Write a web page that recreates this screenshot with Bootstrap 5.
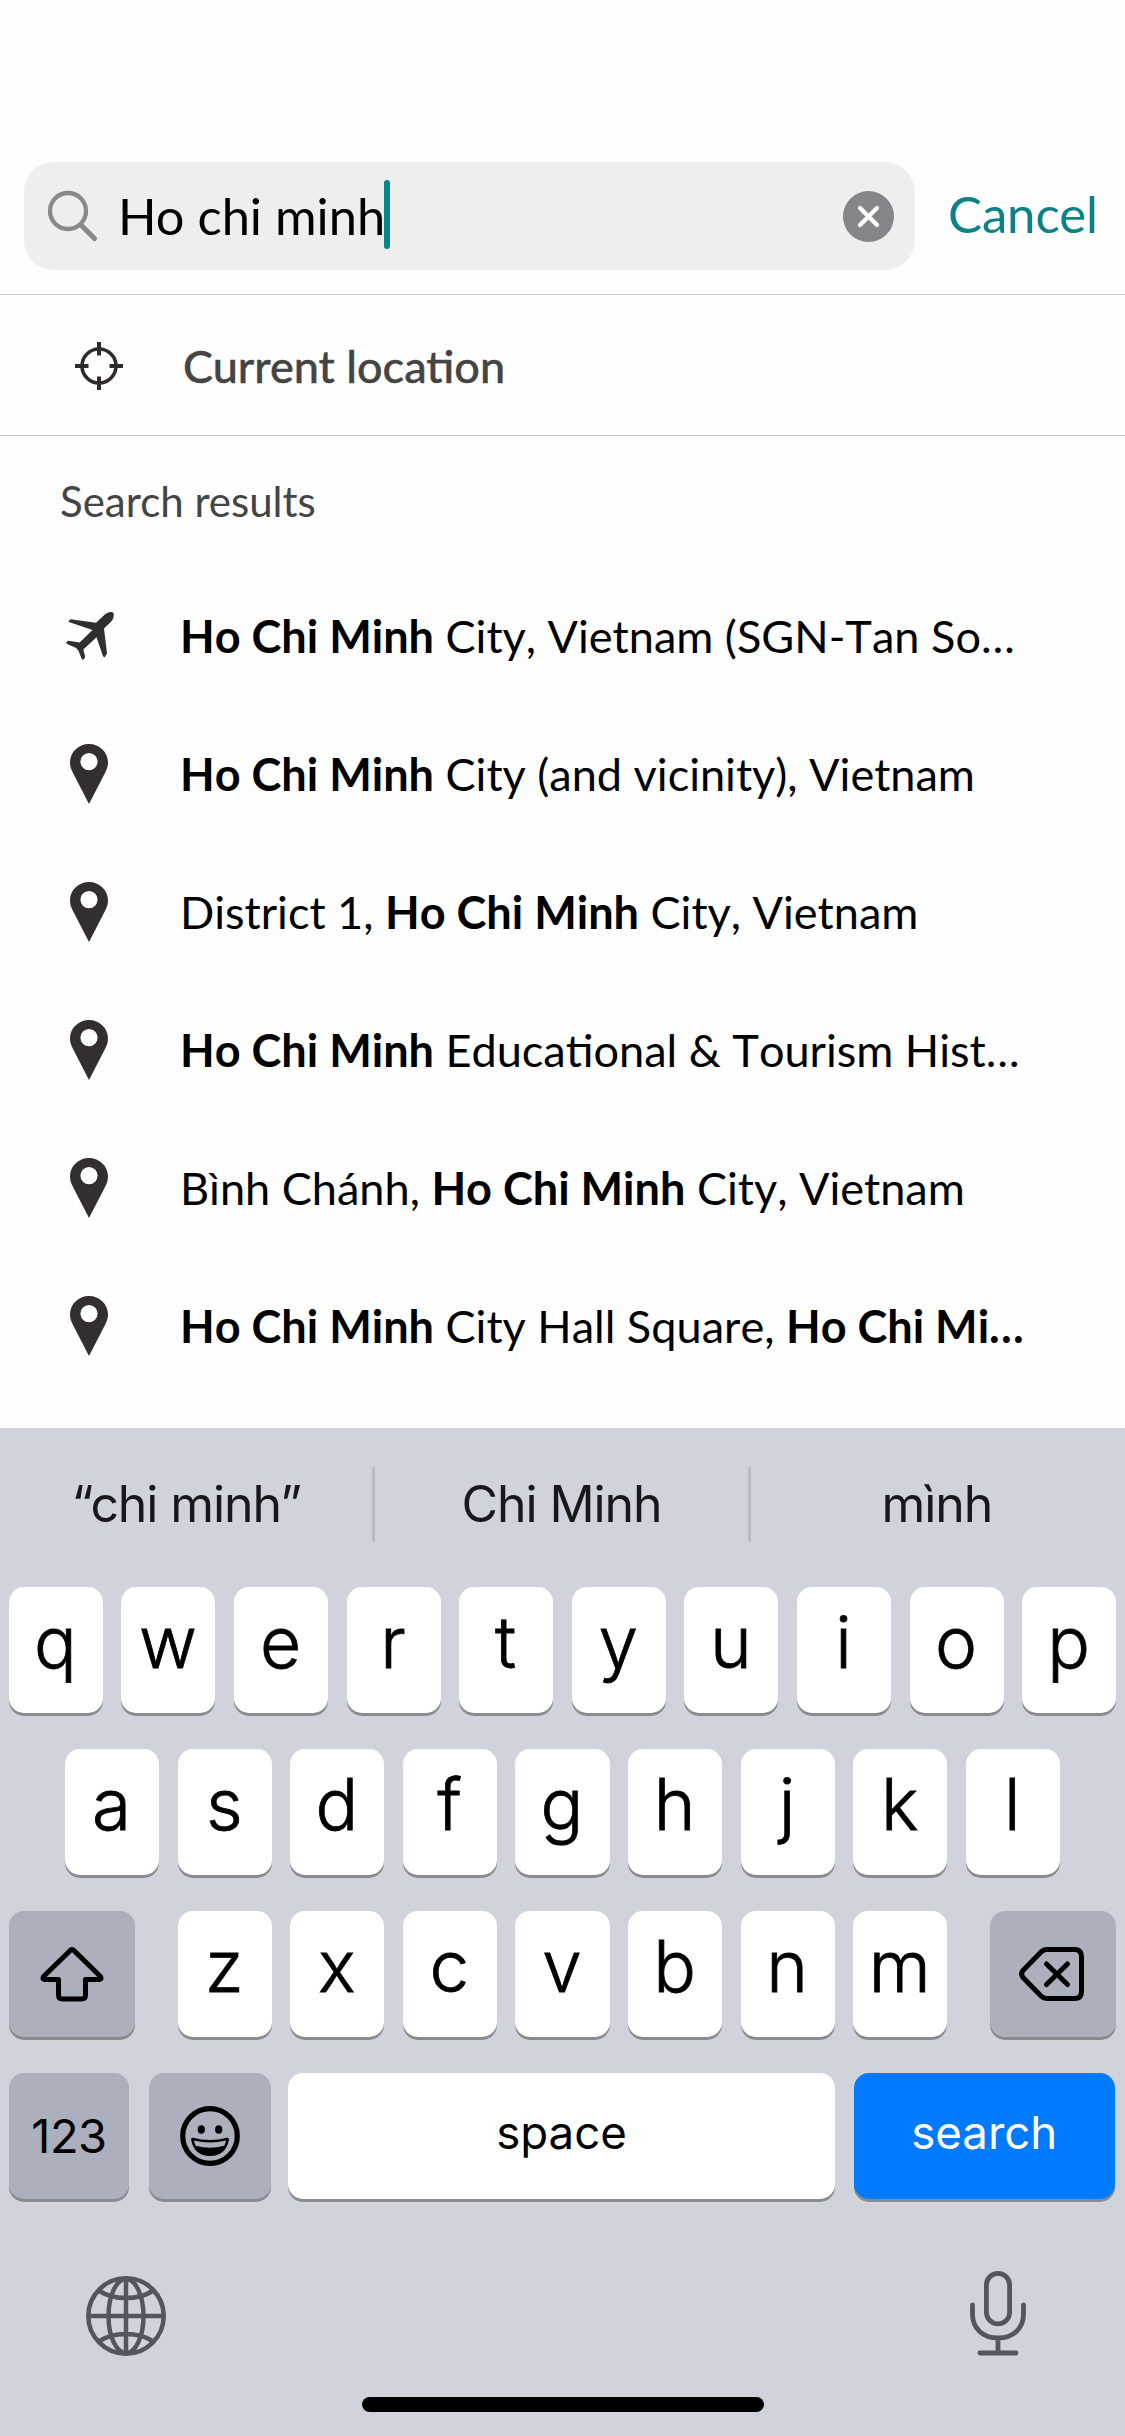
<!DOCTYPE html>
<html lang="en">
<head>
<meta charset="utf-8">
<meta name="viewport" content="width=device-width, initial-scale=1">
<title>Location search</title>
<link rel="stylesheet" href="https://cdn.jsdelivr.net/npm/bootstrap@5.3.0/dist/css/bootstrap.min.css">
<style>
  body { width: 1125px; height: 2436px; overflow: hidden; background: #fefefe; color: #000; font-family: Lato, "Noto Sans", sans-serif; }
  svg { display: block; flex: none; overflow: visible; }
  .screen { height: 2436px; }
  .topbar { height: 295px; padding: 162px 0 0 24px; border-bottom: 1px solid #c6c6c8; }
  .searchbox { width: 891px; height: 108px; border-radius: 30px; background: #eee; padding: 0 21px 0 24px; }
  .query { font-size: 50.6px; line-height: 60px; margin-left: 20px; white-space: nowrap; }
  .caret { width: 6px; height: 69px; border-radius: 3px; background: #04868a; margin-bottom: 3px; margin-left: -1px; }
  .cancel { font-size: 51px; line-height: 60px; height: 108px; color: #0c8285; margin-left: 33px; padding-bottom: 4px; letter-spacing: -.15px; }
  .here { height: 141px; border-bottom: 1px solid #c6c6c8; padding-left: 75px; font-size: 45px; font-weight: 500; color: #444; }
  .here span { margin-left: 60px; padding-top: 3px; -webkit-text-stroke: .4px #444; }
  .here svg { margin-top: 1px; }
  .heading { height: 130px; padding-left: 60px; font-size: 42px; color: #444; }
  .hit { height: 138px; font-size: 45.05px; line-height: 60px; white-space: nowrap; }
  .hit-icon { width: 180px; padding: 1px 0 0 66px; }
  .hit-icon .pin { margin-left: 4px; }
  .hit-text { padding-top: 1px; font-kerning: none; }
  .hit b { font-weight: 700; }
  .keyboard { height: 1008px; background: #d0d3db; font-family: Inter, "Liberation Sans", sans-serif; }
  .suggest { height: 152px; padding: 1px 2px 0 0; font-size: 50px; letter-spacing: -1.1px; color: #16181b; }
  .suggest > div { flex: 1 1 0; }
  .suggest i { width: 3px; height: 75px; background: #b9bcc3; border-radius: 1px; }
  .keys { padding: 7px 9px 0; gap: 36px; }
  .keyrow { height: 126px; }
  .keyrow.letters { gap: 18.5px; }
  .keycap { width: 94.1px; height: 126px; flex: none; border-radius: 15px; background: #fff; box-shadow: 0 3px 0 #898b8f; font-size: 71px; font-weight: 300; line-height: 80px; padding: 0 1px 16px 0; }
  .letters .keycap { -webkit-text-stroke: .8px #000; }
  .keycap.fn { background: #abb0bc; width: 126px; padding: 0; }
  .keycap.label-key { font-size: 45.6px; font-weight: 400; padding: 0 0 7px; }
  .keycap.num { font-size: 47px; font-weight: 400; width: 120px; letter-spacing: -.5px; }
  .keycap.emoji { width: 122px; margin-left: 20px; }
  .keycap.space { width: 547px; margin-left: 17px; }
  .keycap.go { width: 261.5px; margin-left: 18.5px; background: #007aff; color: #fff; }
  .dock { padding: 69px 99px 0 86px; height: 198px; }
  .dock .mic { margin-top: 3px; }
  .homebar { width: 402px; height: 15px; border-radius: 8px; background: #000; }
</style>
<script src="https://cdn.jsdelivr.net/npm/bootstrap@5.3.0/dist/js/bootstrap.bundle.min.js"></script>
</head>
<body>
<svg width="0" height="0" class="position-absolute" aria-hidden="true">
  <symbol id="pin" viewBox="0 0 38 60"><path fill="#332f30" fill-rule="evenodd" d="M19 0C8.400 0 0 8.200 0 18.500c0 4.200 1.300 7 3 10.500L19 60l16-31c1.700-3.500 3-6.300 3-10.500C38 8.200 29.600 0 19 0Zm0 9a8.600 8.600 0 1 1 0 17.200A8.600 8.600 0 0 1 19 9Z"/></symbol>
</svg>
<div class="screen d-flex flex-column">
  <header class="topbar d-flex">
    <div class="searchbox d-flex align-items-center">
      <svg width="50" height="50" viewBox="0 0 50 50" fill="none" stroke="#8a8a8d"><circle cx="20" cy="20" r="18" stroke-width="4.300"/><path d="M33 34l13.500 13.500" stroke-width="5.200" stroke-linecap="round"/></svg>
      <span class="query">Ho chi minh</span><span class="caret"></span>
      <svg class="ms-auto" width="51" height="51" viewBox="0 0 51 51"><circle cx="25.500" cy="25.500" r="25.500" fill="#858589"/><path d="M17 17l17 17M34 17L17 34" stroke="#fff" stroke-width="4.300" stroke-linecap="round"/></svg>
    </div>
    <span class="cancel d-flex align-items-center">Cancel</span>
  </header>

  <div class="here d-flex align-items-center">
    <svg width="48" height="48" viewBox="0 0 48 48" fill="none" stroke="#2f2b2a"><circle cx="24" cy="24" r="17" stroke-width="3.600"/><path stroke-width="4" d="M24 0v13.500M24 34.500V48M0 24h13.500M34.500 24H48"/></svg>
    <span>Current location</span>
  </div>

  <div class="heading d-flex align-items-center">Search results</div>

  <div class="hits">
    <div class="hit d-flex align-items-center">
      <div class="hit-icon"><svg width="48" height="48" viewBox="0 0 48 48"><path fill="#302f2d" d="M38 3.300C41 .5 44.500-.5 46.500.3c1.700.8 1.600 3 .7 5.700C46.500 8 46 8.600 44.500 10.200L38 16.500l3 25-2.500 4-1.500-1.200-6.500-19L17.300 37.500l1.900 7.200-1.700 3-1.700-.4-3.300-8.600-2.400-2.600L.7 31.800.3 30l2-1.200 11.300 1.600L26.500 18 2.200 9.700l2.200-2.500L30 10.700Z"/></svg></div>
      <div class="hit-text"><b>Ho Chi Minh</b> City, Vietnam (SGN-Tan So…</div>
    </div>
    <div class="hit d-flex align-items-center">
      <div class="hit-icon"><svg class="pin" width="38" height="60"><use href="#pin"/></svg></div>
      <div class="hit-text"><b>Ho Chi Minh</b> City (and vicinity), Vietnam</div>
    </div>
    <div class="hit d-flex align-items-center">
      <div class="hit-icon"><svg class="pin" width="38" height="60"><use href="#pin"/></svg></div>
      <div class="hit-text">District 1, <b>Ho Chi Minh</b> City, Vietnam</div>
    </div>
    <div class="hit d-flex align-items-center">
      <div class="hit-icon"><svg class="pin" width="38" height="60"><use href="#pin"/></svg></div>
      <div class="hit-text"><b>Ho Chi Minh</b> Educational &amp; Tourism Hist…</div>
    </div>
    <div class="hit d-flex align-items-center">
      <div class="hit-icon"><svg class="pin" width="38" height="60"><use href="#pin"/></svg></div>
      <div class="hit-text">Bình Chánh, <b>Ho Chi Minh</b> City, Vietnam</div>
    </div>
    <div class="hit d-flex align-items-center">
      <div class="hit-icon"><svg class="pin" width="38" height="60"><use href="#pin"/></svg></div>
      <div class="hit-text"><b>Ho Chi Minh</b> City Hall Square, <b>Ho Chi Mi…</b></div>
    </div>
  </div>

  <div class="keyboard mt-auto">
    <div class="suggest d-flex align-items-center text-center">
      <div>“chi minh”</div><i></i><div>Chi Minh</div><i></i><div>mình</div>
    </div>
    <div class="keys d-flex flex-column">
      <div class="keyrow letters d-flex justify-content-center">
        <div class="keycap d-flex align-items-center justify-content-center">q</div>
        <div class="keycap d-flex align-items-center justify-content-center">w</div>
        <div class="keycap d-flex align-items-center justify-content-center">e</div>
        <div class="keycap d-flex align-items-center justify-content-center">r</div>
        <div class="keycap d-flex align-items-center justify-content-center">t</div>
        <div class="keycap d-flex align-items-center justify-content-center">y</div>
        <div class="keycap d-flex align-items-center justify-content-center">u</div>
        <div class="keycap d-flex align-items-center justify-content-center">i</div>
        <div class="keycap d-flex align-items-center justify-content-center">o</div>
        <div class="keycap d-flex align-items-center justify-content-center">p</div>
      </div>
      <div class="keyrow letters d-flex justify-content-center">
        <div class="keycap d-flex align-items-center justify-content-center">a</div>
        <div class="keycap d-flex align-items-center justify-content-center">s</div>
        <div class="keycap d-flex align-items-center justify-content-center">d</div>
        <div class="keycap d-flex align-items-center justify-content-center">f</div>
        <div class="keycap d-flex align-items-center justify-content-center">g</div>
        <div class="keycap d-flex align-items-center justify-content-center">h</div>
        <div class="keycap d-flex align-items-center justify-content-center">j</div>
        <div class="keycap d-flex align-items-center justify-content-center">k</div>
        <div class="keycap d-flex align-items-center justify-content-center">l</div>
      </div>
      <div class="keyrow d-flex justify-content-between">
        <div class="keycap fn d-flex align-items-center justify-content-center">
          <svg width="64" height="56" viewBox="0 0 64 56" fill="none" stroke="#000" stroke-width="5" stroke-linejoin="round"><path d="M30.500 4.200Q32 2.800 33.500 4.200L60.500 30.500Q62 33.500 59.500 33.500H45.500V49Q45.500 53 41.500 53H22.500Q18.500 53 18.500 49V33.500H4.500Q2 33.500 3.500 30.500Z"/></svg>
        </div>
        <div class="keyrow letters d-flex">
          <div class="keycap d-flex align-items-center justify-content-center">z</div>
          <div class="keycap d-flex align-items-center justify-content-center">x</div>
          <div class="keycap d-flex align-items-center justify-content-center">c</div>
          <div class="keycap d-flex align-items-center justify-content-center">v</div>
          <div class="keycap d-flex align-items-center justify-content-center">b</div>
          <div class="keycap d-flex align-items-center justify-content-center">n</div>
          <div class="keycap d-flex align-items-center justify-content-center">m</div>
        </div>
        <div class="keycap fn d-flex align-items-center justify-content-center">
          <svg class="me-1" width="65" height="54" viewBox="0 0 65 54" fill="none" stroke="#000" stroke-width="5" stroke-linejoin="round" stroke-linecap="round"><path d="M27.500 2.500H55.500Q62.500 2.500 62.500 9.500V44.500Q62.500 51.500 55.500 51.500H27.500Q24.500 51.500 22 49L4 30.500Q1 27 4 23.500L22 5Q24.500 2.500 27.500 2.500Z"/><path d="M27.500 17L48.500 37.500M48.500 17L27.500 37.500"/></svg>
        </div>
      </div>
      <div class="keyrow d-flex">
        <div class="keycap fn num d-flex align-items-center justify-content-center">123</div>
        <div class="keycap fn emoji d-flex align-items-center justify-content-center">
          <svg width="60" height="60" viewBox="0 0 60 60"><circle cx="30" cy="30" r="27.300" fill="none" stroke="#000" stroke-width="5.200"/><ellipse cx="21.300" cy="23.500" rx="3.600" ry="4.300"/><ellipse cx="38.700" cy="23.500" rx="3.600" ry="4.300"/><path d="M13.200 31.700Q30 36.300 46.800 31.700Q49.300 31.300 48.900 34Q45.500 50 30 50T11.100 34Q10.700 31.300 13.200 31.700Z"/><path fill="#abb0bc" d="M14 34.500Q30 38.700 46 34.500Q45.700 37 44.300 39.800Q30 43.500 15.700 39.800Q14.300 37 14 34.500Z"/></svg>
        </div>
        <div class="keycap label-key space d-flex align-items-center justify-content-center">space</div>
        <div class="keycap label-key go d-flex align-items-center justify-content-center">search</div>
      </div>
    </div>
    <div class="dock d-flex justify-content-between align-items-start">
      <svg class="mt-2" width="80" height="80" viewBox="0 0 80 80" fill="none" stroke="#53575d" stroke-width="4.500"><circle cx="40" cy="40" r="37.700"/><ellipse cx="40" cy="40" rx="17.500" ry="37"/><path d="M40 2v76M2 40h76M12.500 14.500Q24 22 40 22T67.500 14.500M12.500 65.500Q24 58 40 58T67.500 65.500"/></svg>
      <svg class="mic" width="56" height="85" viewBox="0 0 56 85" fill="none" stroke="#53575d" stroke-width="4.800" stroke-linecap="round"><rect x="16.400" y="2.400" width="23.200" height="50.500" rx="11.600"/><path d="M2.500 34V43C2.500 57.500 13 67 28 67S53.500 57.500 53.500 43V34M28 67V82M10 82H46"/></svg>
    </div>
    <div class="homebar mx-auto"></div>
  </div>
</div>
</body>
</html>
